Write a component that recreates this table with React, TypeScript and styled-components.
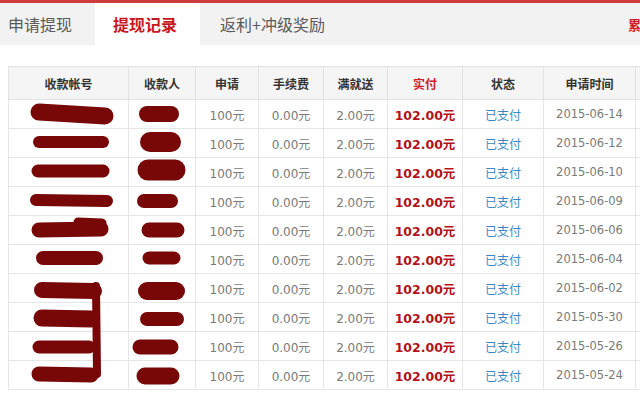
import React from 'react'
import styled, { createGlobalStyle } from 'styled-components'

const GlobalStyle = createGlobalStyle`
    html, body {
        margin: 0;
        padding: 0;
        background: #fff;
        overflow: hidden;
    }
`

const Page = styled.div`
    position: relative;
    width: 690px;
    height: 396px;
    font-family: 'Noto Sans CJK SC', 'Noto Sans', sans-serif;
    overflow: hidden;
`

const TabBar = styled.div`
    display: flex;
    align-items: stretch;
    height: 42px;
    background-color: #f2f2f2;
    border-top: 3px solid #cf3b3b;
`

const Tab = styled.div<{ $active?: boolean; $width: number; $pad: number }>`
    display: flex;
    align-items: center;
    box-sizing: border-box;
    width: ${(p) => p.$width}px;
    padding-left: ${(p) => p.$pad}px;
    font-size: 16px;
    color: ${(p) => (p.$active ? '#c9171e' : '#5a5a5a')};
    font-weight: ${(p) => (p.$active ? 700 : 400)};
    background-color: ${(p) => (p.$active ? '#fff' : 'transparent')};
`

const TabLink = styled.div`
    margin-left: auto;
    display: flex;
    align-items: center;
    padding-right: 10px;
    font-size: 13px;
    font-weight: 700;
    color: #d0202a;
`

const TableWrap = styled.div`
    padding: 21px 0 0 8px;
`

const Table = styled.table`
    border-collapse: collapse;
    table-layout: fixed;
    width: 707px;
`

const HeadCell = styled.th<{ $red?: boolean }>`
    height: 32px;
    padding: 0;
    border: 1px solid #e2e2e2;
    background-color: #f5f5f5;
    font-size: 12px;
    font-weight: 700;
    color: ${(p) => (p.$red ? '#d0202a' : '#333')};
    text-align: center;
`

const Cell = styled.td<{ $kind?: 'money' | 'status' | 'date' }>`
    height: 28px;
    padding: 0;
    border: 1px solid #e6e6e6;
    text-align: center;
    font-family: 'DejaVu Sans', 'Noto Sans CJK SC', sans-serif;
    font-size: ${(p) => (p.$kind === 'money' ? '12.5px' : p.$kind === 'date' ? '11.5px' : '12px')};
    font-weight: ${(p) => (p.$kind === 'money' ? 700 : 400)};
    color: ${(p) =>
        p.$kind === 'money' ? '#b3121a' : p.$kind === 'status' ? '#3a87c6' : '#7a7a7a'};
`

const StatusText = styled.span`
    font-family: 'Noto Sans CJK SC', sans-serif;
`

// covers the hand-drawn redactions over the first two columns
const Redaction = styled.svg`
    position: absolute;
    left: 0;
    top: 0;
    pointer-events: none;
`

const columns = [
    { title: '收款帐号', width: 120 },
    { title: '收款人', width: 67 },
    { title: '申请', width: 63 },
    { title: '手续费', width: 65 },
    { title: '满就送', width: 64 },
    { title: '实付', width: 75, red: true },
    { title: '状态', width: 81 },
    { title: '申请时间', width: 92 },
    { title: '操作', width: 80 },
]

const dates = [
    '2015-06-14',
    '2015-06-12',
    '2015-06-10',
    '2015-06-09',
    '2015-06-06',
    '2015-06-04',
    '2015-06-02',
    '2015-05-30',
    '2015-05-26',
    '2015-05-24',
]

// [x1, y1, x2, y2, thickness]
const strokes: [number, number, number, number, number][] = [
    [39, 112, 105, 116, 17],
    [39, 142, 103, 142, 12],
    [38, 171, 103, 171, 13],
    [36, 200, 107, 201, 12],
    [39, 230, 101, 229, 15],
    [78, 222, 102, 223, 9],
    [43, 258, 96, 258, 14],
    [42, 290, 94, 291, 16],
    [96, 286, 97, 374, 8],
    [42, 318, 91, 319, 17],
    [39, 347, 89, 347, 13],
    [39, 374, 91, 375, 15],
    [147, 114, 171, 114, 16],
    [150, 142, 171, 142, 20],
    [148, 170, 175, 170, 21],
    [144, 201, 171, 201, 14],
    [149, 230, 177, 230, 15],
    [149, 258, 174, 258, 13],
    [147, 291, 176, 291, 18],
    [147, 319, 177, 319, 14],
    [140, 347, 171, 347, 15],
    [145, 376, 171, 376, 17],
]

export default function App() {
    return (
        <Page>
            <GlobalStyle />
            <TabBar>
                <Tab $width={95} $pad={8}>申请提现</Tab>
                <Tab $width={105} $pad={18} $active>
                    提现记录
                </Tab>
                <Tab $width={150} $pad={20}>返利+冲级奖励</Tab>
                <TabLink>累积收益</TabLink>
            </TabBar>
            <TableWrap>
                <Table>
                    <colgroup>
                        {columns.map((c) => (
                            <col key={c.title} style={{ width: c.width }} />
                        ))}
                    </colgroup>
                    <thead>
                        <tr>
                            {columns.map((c) => (
                                <HeadCell key={c.title} $red={c.red}>
                                    {c.title}
                                </HeadCell>
                            ))}
                        </tr>
                    </thead>
                    <tbody>
                        {dates.map((d) => (
                            <tr key={d}>
                                <Cell />
                                <Cell />
                                <Cell>100元</Cell>
                                <Cell>0.00元</Cell>
                                <Cell>2.00元</Cell>
                                <Cell $kind="money">102.00元</Cell>
                                <Cell $kind="status">
                                    <StatusText>已支付</StatusText>
                                </Cell>
                                <Cell $kind="date">{d}</Cell>
                                <Cell />
                            </tr>
                        ))}
                    </tbody>
                </Table>
            </TableWrap>
            <Redaction width="200" height="396" viewBox="0 0 200 396">
                {strokes.map(([x1, y1, x2, y2, w], i) => (
                    <line
                        key={i}
                        x1={x1}
                        y1={y1}
                        x2={x2}
                        y2={y2}
                        stroke="#780808"
                        strokeWidth={w}
                        strokeLinecap="round"
                    />
                ))}
            </Redaction>
        </Page>
    )
}
